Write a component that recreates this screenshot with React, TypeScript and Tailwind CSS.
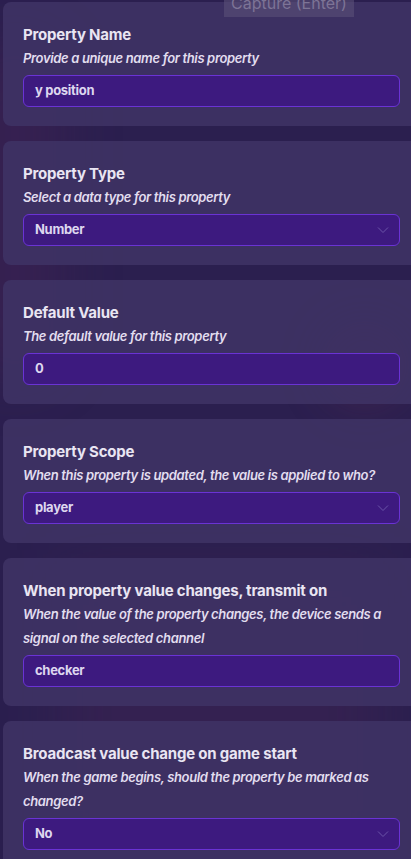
import React from 'react';

type Field = {
  title: string;
  hint: string;
  value: string;
  select?: boolean;
};

const fields: Field[] = [
  { title: 'Property Name', hint: 'Provide a unique name for this property', value: 'y position' },
  { title: 'Property Type', hint: 'Select a data type for this property', value: 'Number', select: true },
  { title: 'Default Value', hint: 'The default value for this property', value: '0' },
  { title: 'Property Scope', hint: 'When this property is updated, the value is applied to who?', value: 'player', select: true },
  {
    title: 'When property value changes, transmit on',
    hint: 'When the value of the property changes, the device sends a signal on the selected channel',
    value: 'checker',
  },
  {
    title: 'Broadcast value change on game start',
    hint: 'When the game begins, should the property be marked as changed?',
    value: 'No',
    select: true,
  },
];

const Chevron = () => (
  <svg width="12" height="8" viewBox="0 0 12 8" fill="none" className="shrink-0">
    <path d="M1 1.5L6 6.5L11 1.5" stroke="#6b54a8" strokeWidth="1" />
  </svg>
);

const FieldCard: React.FC<{ field: Field }> = ({ field }) => (
  <div className="w-[417px] rounded-[8px] bg-[#3e3264]/90 px-[20px] pt-[22px] pb-[19px]">
    <div className="text-[15px] leading-[22px] font-bold text-[#e9e5f2] tracking-[-0.2px]">{field.title}</div>
    <div className="text-[13px] leading-[24px] font-semibold italic text-[#e2ddef] tracking-[-0.35px] pr-[14px]">
      {field.hint}
    </div>
    <div className="mt-[5px] h-[32px] rounded-[6px] border border-[#6a33d4] bg-[#3d1a7f] pl-[11px] pr-[10px] flex items-center justify-between">
      <span className="text-[13px] font-bold text-[#ddd7ef] tracking-[-0.3px]">{field.value}</span>
      {field.select && <Chevron />}
    </div>
  </div>
);

export default function App() {
  return (
    <div
      className="relative w-[411px] h-[859px] overflow-hidden bg-[#2b1f4f]"
      style={{ fontFamily: 'Inter, "Noto Sans", sans-serif' }}
    >
      {/* faint background art behind the panels */}
      <div className="absolute left-[-30px] top-[40px] w-[90px] h-[340px] rounded-full bg-[#6a2a5a]/20 blur-[30px]" />
      <div className="absolute left-[320px] top-[320px] w-[90px] h-[90px] rounded-full bg-[#7a3050]/20 blur-[20px]" />
      <div className="absolute left-[60px] top-[570px] w-[320px] h-[290px] bg-[#6a3060]/15 blur-[30px]" />

      <div className="relative flex flex-col gap-[15px] pt-[2px] pl-[3px]">
        {fields.map((f, i) => (
          <FieldCard key={i} field={f} />
        ))}
      </div>

      <div className="absolute left-[224px] top-0 w-[130px] h-[17px] bg-[#5a5078]/60 overflow-hidden flex justify-center">
        <span className="text-[16px] leading-[16px] mt-[-5px] text-[#7d7496]">Capture (Enter)</span>
      </div>
    </div>
  );
}
